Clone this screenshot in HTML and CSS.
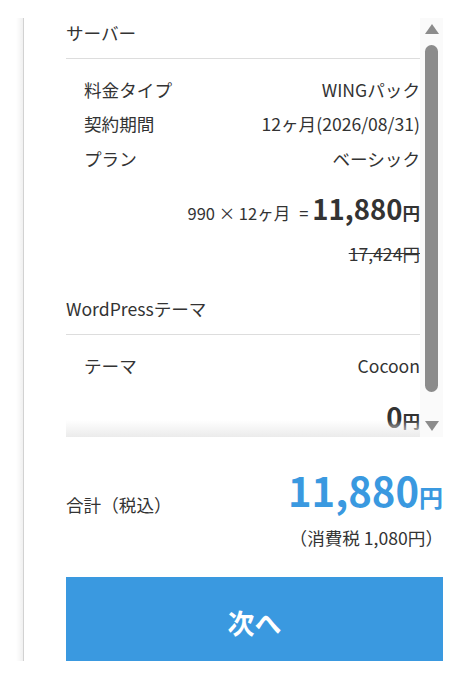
FILE: index.html
```html
<!DOCTYPE html>
<html lang="ja">
<head>
  <meta charset="UTF-8" />
  <title>お申し込み内容</title>
  <link rel="stylesheet" href="styles.css">
</head>
<body>
  <div class="side">
    <div class="panel">
      <div class="summary">
        <div class="summary-body">
          <h3 class="group-title">サーバー</h3>
          <dl class="rows">
            <div class="row"><dt>料金タイプ</dt><dd>WINGパック</dd></div>
            <div class="row"><dt>契約期間</dt><dd>12ヶ月(2026/08/31)</dd></div>
            <div class="row"><dt>プラン</dt><dd>ベーシック</dd></div>
          </dl>
          <p class="price">990 × 12ヶ月<span class="eq">=</span><strong>11,880</strong><span class="yen">円</span></p>
          <p class="regular"><s>17,424円</s></p>

          <h3 class="group-title group-title--next">WordPressテーマ</h3>
          <dl class="rows">
            <div class="row"><dt>テーマ</dt><dd>Cocoon</dd></div>
          </dl>
          <p class="price"><strong>0</strong><span class="yen">円</span></p>
        </div>

        <div class="scrollbar">
          <span class="scroll-arrow scroll-arrow--up"></span>
          <div class="scroll-track">
            <div class="scroll-thumb" style="height: 347px"></div>
          </div>
          <span class="scroll-arrow scroll-arrow--down"></span>
        </div>
      </div>

      <div class="total">
        <div class="total-row">
          <span class="total-label">合計（税込）</span>
          <span class="total-price">11,880<small>円</small></span>
        </div>
        <p class="tax">（消費税 1,080円）</p>
        <button class="next">次へ</button>
      </div>
    </div>
  </div>
</body>
</html>
```

FILE: styles.css
```css
* {
  box-sizing: border-box;
}
body {
  margin: 0;
  font-family: "Noto Sans CJK JP", sans-serif;
  color: #333;
  background: #fff;
}
.side {
  margin: 18px 32px 0 16px;
  padding-left: 7px;
  background: linear-gradient(to right, rgba(0,0,0,0), rgba(0,0,0,0.06)) no-repeat left top / 7px 100%;
}
.panel {
  border-left: 1px solid #d2d2d2;
  padding-left: 42px;
}

/* scroll box */
.summary {
  position: relative;
  display: flex;
  height: 419px;
}
.summary::after {
  content: "";
  position: absolute;
  left: 0;
  right: 23px;
  bottom: 0;
  height: 17px;
  background: linear-gradient(rgba(255,255,255,0), #ebebeb);
  pointer-events: none;
}
.summary-body {
  flex: 1;
  min-width: 0;
  overflow: hidden;
}
.scrollbar {
  width: 23px;
  display: flex;
  flex-direction: column;
  background: #fafafa;
}
.scroll-arrow {
  height: 22px;
  display: flex;
  align-items: center;
  justify-content: center;
}
.scroll-arrow::before {
  content: "";
  border-left: 7px solid transparent;
  border-right: 7px solid transparent;
}
.scroll-arrow--up::before {
  border-bottom: 10px solid #8c8c8c;
}
.scroll-arrow--down::before {
  border-top: 10px solid #8c8c8c;
}
.scroll-track {
  flex: 1;
  padding: 5px;
}
.scroll-thumb {
  background: #8c8c8c;
  border-radius: 7px;
}

.group-title {
  margin: 0;
  padding: 2px 0 12px;
  font-size: 17.6px;
  font-weight: normal;
  line-height: 26px;
  border-bottom: 1px solid #ddd;
}
.group-title--next {
  margin-top: 28px;
}
.rows {
  margin: 14px 0 0;
  padding-left: 18px;
}
.row {
  display: flex;
  justify-content: space-between;
  padding: 4px 0;
  font-size: 17.6px;
  line-height: 26.4px;
}
.row dt,
.row dd {
  margin: 0;
}
.price {
  margin: 12px 0 0;
  text-align: right;
  font-size: 16.5px;
  line-height: 40px;
}
.price .eq {
  margin: 0 4px 0 9px;
}
.price strong {
  font-size: 27.5px;
}
.price .yen {
  font-weight: bold;
  font-size: 17.6px;
  line-height: 1;
}
.regular {
  margin: 9px 0 0;
  text-align: right;
  font-size: 17.6px;
  line-height: 24px;
}

/* total */
.total {
  padding-top: 25px;
}
.total-row {
  display: flex;
  justify-content: space-between;
  align-items: flex-end;
}
.total-label {
  font-size: 17.6px;
  line-height: 26px;
}
.total-price {
  color: #3a99e0;
  font-weight: bold;
  font-size: 40px;
  line-height: 56px;
}
.total-price small {
  font-size: 24px;
  line-height: 1;
}
.tax {
  margin: 8px 0 0;
  text-align: right;
  font-size: 17.6px;
  line-height: 24px;
}
.next {
  display: block;
  width: 100%;
  height: 84px;
  margin-top: 27px;
  padding: 6px 0 0;
  border: none;
  background-color: #3a99e0;
  color: #fff;
  font-family: "Noto Sans CJK JP", sans-serif;
  font-size: 27px;
  font-weight: bold;
  cursor: pointer;
}
```
